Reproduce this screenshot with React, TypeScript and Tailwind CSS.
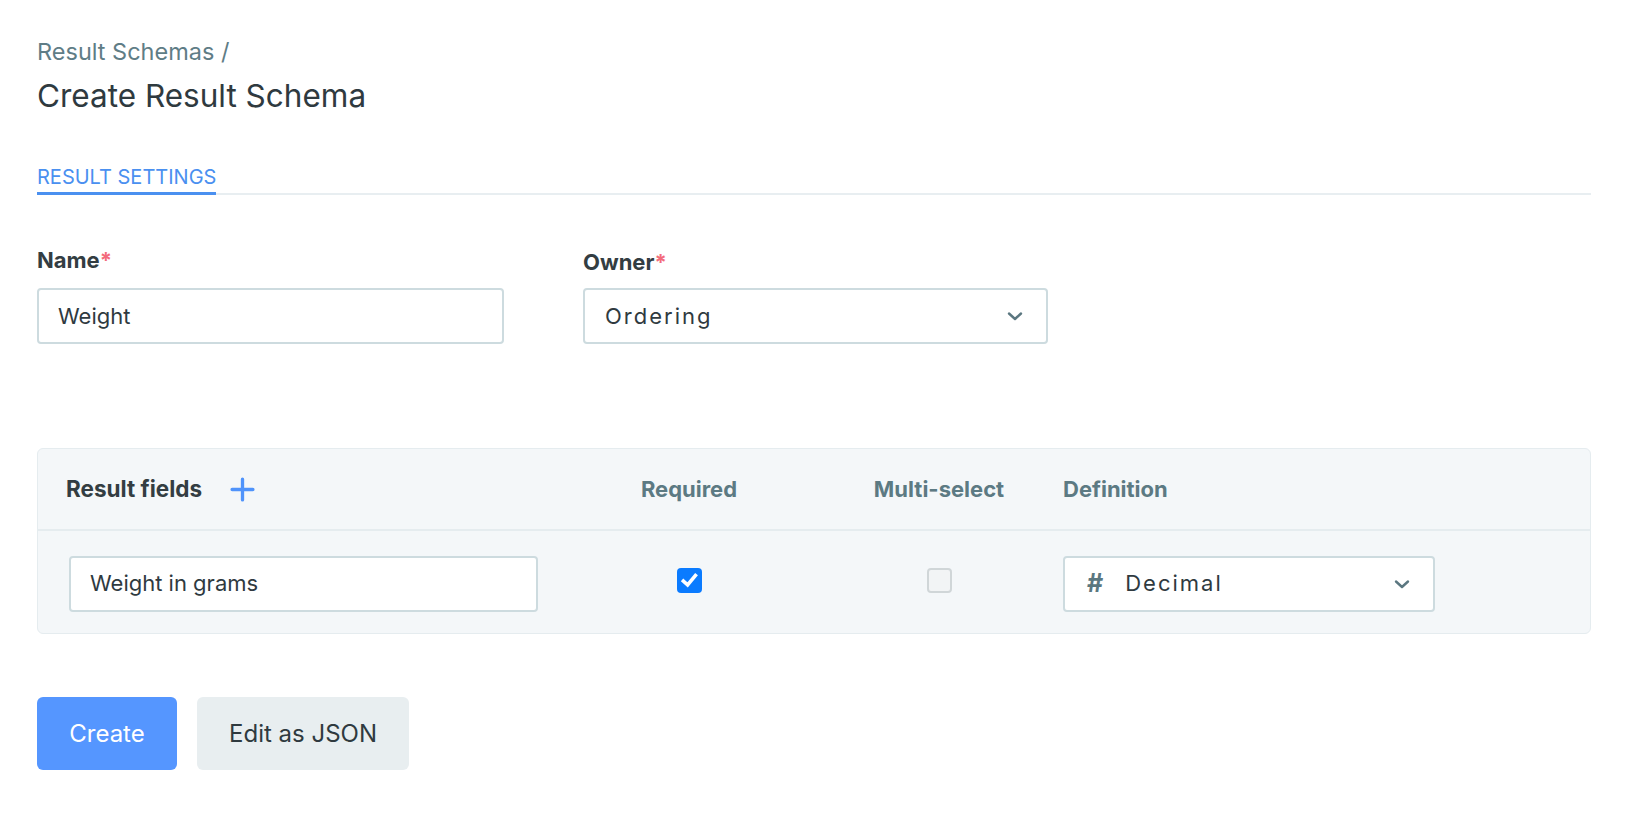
import React from "react";

function Chevron() {
  return (
    <svg width="18" height="12" viewBox="0 0 18 12" fill="none">
      <path d="M3 3.5 L9 9 L15 3.5" stroke="#5b7780" strokeWidth="2.4" strokeLinecap="round" strokeLinejoin="round" />
    </svg>
  );
}

export default function App() {
  return (
    <div className="min-h-screen bg-white pl-[37px] pr-[35px] pt-[35px] font-['Inter',sans-serif] text-[#2f3a3f]">
      <div className="text-[23.5px] leading-[34px] text-[#5f7d86]">Result Schemas /</div>
      <div className="mt-[7px] text-[31.5px] leading-[40px] text-[#2f3a3f]">Create Result Schema</div>

      <div className="mt-[48px] border-b-2 border-[#e8eef1]">
        <div className="-mb-[2px] inline-block border-b-[3px] border-[#4a90f0] pb-[2px] text-[20px] leading-[26px] text-[#4a90f0]">
          RESULT SETTINGS
        </div>
      </div>

      <div className="mt-[50px] flex gap-[79px]">
        <div className="w-[467px]">
          <div className="text-[22px] font-bold leading-[30px] text-[#333d42]">
            Name<span className="text-[#f36b7b]">*</span>
          </div>
          <div className="mt-[13px] flex h-[56px] items-center rounded-[4px] border-2 border-[#cddbdf] bg-white px-[19px] text-[22px] text-[#2f3a3f]">
            Weight
          </div>
        </div>
        <div className="w-[465px]">
          <div className="mt-[2px] text-[22px] font-bold leading-[30px] text-[#333d42]">
            Owner<span className="text-[#f36b7b]">*</span>
          </div>
          <div className="mt-[11px] flex h-[56px] items-center justify-between rounded-[4px] border-2 border-[#cddbdf] bg-white pl-[20px] pr-[22px] text-[22px] tracking-[2px] text-[#2f3a3f]">
            <span>Ordering</span>
            <Chevron />
          </div>
        </div>
      </div>

      <div className="mt-[104px] overflow-hidden rounded-[6px] border border-[#e5ecef] bg-[#f4f7f9]">
        <div className="flex h-[82px] items-center border-b-2 border-[#e5ecef] pl-[28px] text-[22px] font-bold">
          <div className="flex w-[513px] items-center text-[#333d42]">
            <span className="text-[22.5px]">Result fields</span>
            <svg className="ml-[28px]" width="25" height="25" viewBox="0 0 24 24" fill="none">
              <path d="M12 2 V22 M2 12 H22" stroke="#4f93fb" strokeWidth="3.2" strokeLinecap="round" />
            </svg>
          </div>
          <div className="w-[220px] text-center text-[#5c7a83]">Required</div>
          <div className="w-[30px]" />
          <div className="w-[220px] text-center text-[#5c7a83]">Multi-select</div>
          <div className="ml-[14px] text-[#5c7a83]">Definition</div>
        </div>
        <div className="flex h-[102px] items-center pl-[31px] pt-[3px]">
          <div className="w-[510px]">
            <div className="flex h-[56px] w-[469px] items-center rounded-[4px] border-2 border-[#cddbdf] bg-white px-[19px] text-[22px] text-[#2f3a3f]">
              Weight in grams
            </div>
          </div>
          <div className="flex w-[220px] justify-center">
            <div className="-mt-[6px] flex h-[25px] w-[25px] items-center justify-center rounded-[4px] bg-[#0a7bff]">
              <svg width="19" height="19" viewBox="0 0 18 18" fill="none">
                <path d="M3.2 9.6 L7.2 13.2 L14.6 4.2" stroke="white" strokeWidth="3.4" strokeLinecap="square" />
              </svg>
            </div>
          </div>
          <div className="w-[30px]" />
          <div className="flex w-[220px] justify-center">
            <div className="-mt-[6px] h-[25px] w-[25px] rounded-[4px] border-2 border-[#d0d6d8] bg-[#f2f4f5]" />
          </div>
          <div className="ml-[14px] flex h-[56px] w-[372px] items-center justify-between rounded-[4px] border-2 border-[#cddbdf] bg-white pl-[22px] pr-[22px]">
            <div className="flex items-center">
              <span className="text-[25px] font-bold leading-none text-[#5b7780]">#</span>
              <span className="ml-[22px] text-[22px] tracking-[2px] text-[#2f3a3f]">Decimal</span>
            </div>
            <Chevron />
          </div>
        </div>
      </div>

      <div className="mt-[63px] flex gap-[20px]">
        <button className="flex h-[73px] w-[140px] items-center justify-center rounded-[6px] bg-[#5596ff] text-[24px] text-white">
          Create
        </button>
        <button className="flex h-[73px] w-[212px] items-center justify-center rounded-[6px] bg-[#e8eef0] text-[24px] text-[#2f3a3f]">
          Edit as JSON
        </button>
      </div>
    </div>
  );
}
